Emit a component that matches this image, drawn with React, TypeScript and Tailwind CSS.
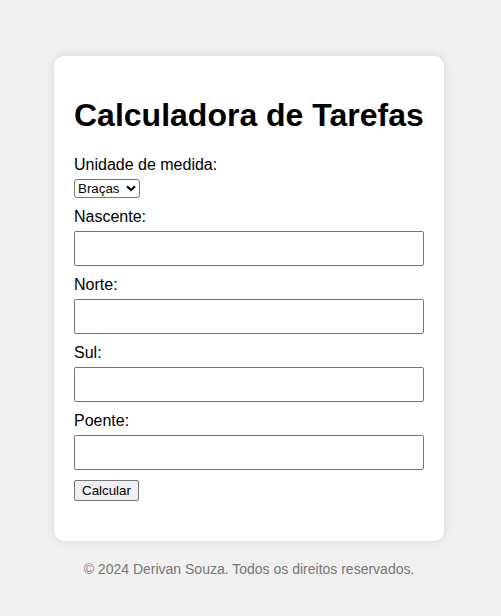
export default function App() {
  const campos = ["Nascente", "Norte", "Sul", "Poente"];

  return (
    <div className="min-h-[616px] bg-[#f0f0f0] pt-[56px] font-['Liberation_Sans',Arial,sans-serif] text-black">
      <div className="ml-[54px] w-[390px]">
        <div className="rounded-[10px] bg-white px-[20px] pt-[20px] pb-[40px] shadow-[0_0_10px_rgba(0,0,0,0.1)]">
          <h1 className="my-[21.44px] text-[32px] font-bold leading-[37px]">Calculadora de Tarefas</h1>
          <form onSubmit={(e) => e.preventDefault()}>
            <label className="mb-[5px] block text-[16px] leading-[18px]">Unidade de medida:</label>
            <div className="relative mb-[10px] w-fit">
              <select className="block h-[19px] appearance-none rounded-[3px] border border-[#767676] bg-white pl-[3px] pr-[19px] text-[13.33px] leading-[15px]">
                <option>Braças</option>
                <option>Metros</option>
              </select>
              <svg
                className="pointer-events-none absolute right-[4px] top-[6px]"
                width="10"
                height="7"
                viewBox="0 0 10 7"
              >
                <path d="M1 1.2 L5 5 L9 1.2" fill="none" stroke="#000" strokeWidth="2" />
              </svg>
            </div>
            {campos.map((c) => (
              <div key={c}>
                <label className="mb-[5px] block text-[16px] leading-[18px]">{c}:</label>
                <input
                  type="number"
                  className="mb-[10px] block h-[35px] w-full rounded-[2px] border border-[#767676] bg-white px-[8px] text-[16px]"
                />
              </div>
            ))}
            <button
              type="submit"
              className="block h-[21px] rounded-[2px] border border-[#767676] bg-[#efefef] px-[7px] text-[13.33px] leading-[15px]"
            >
              Calcular
            </button>
          </form>
        </div>
        <footer className="mt-[20px] text-center text-[14px] leading-[16px] text-[#777]">
          © 2024 Derivan Souza. Todos os direitos reservados.
        </footer>
      </div>
    </div>
  );
}
